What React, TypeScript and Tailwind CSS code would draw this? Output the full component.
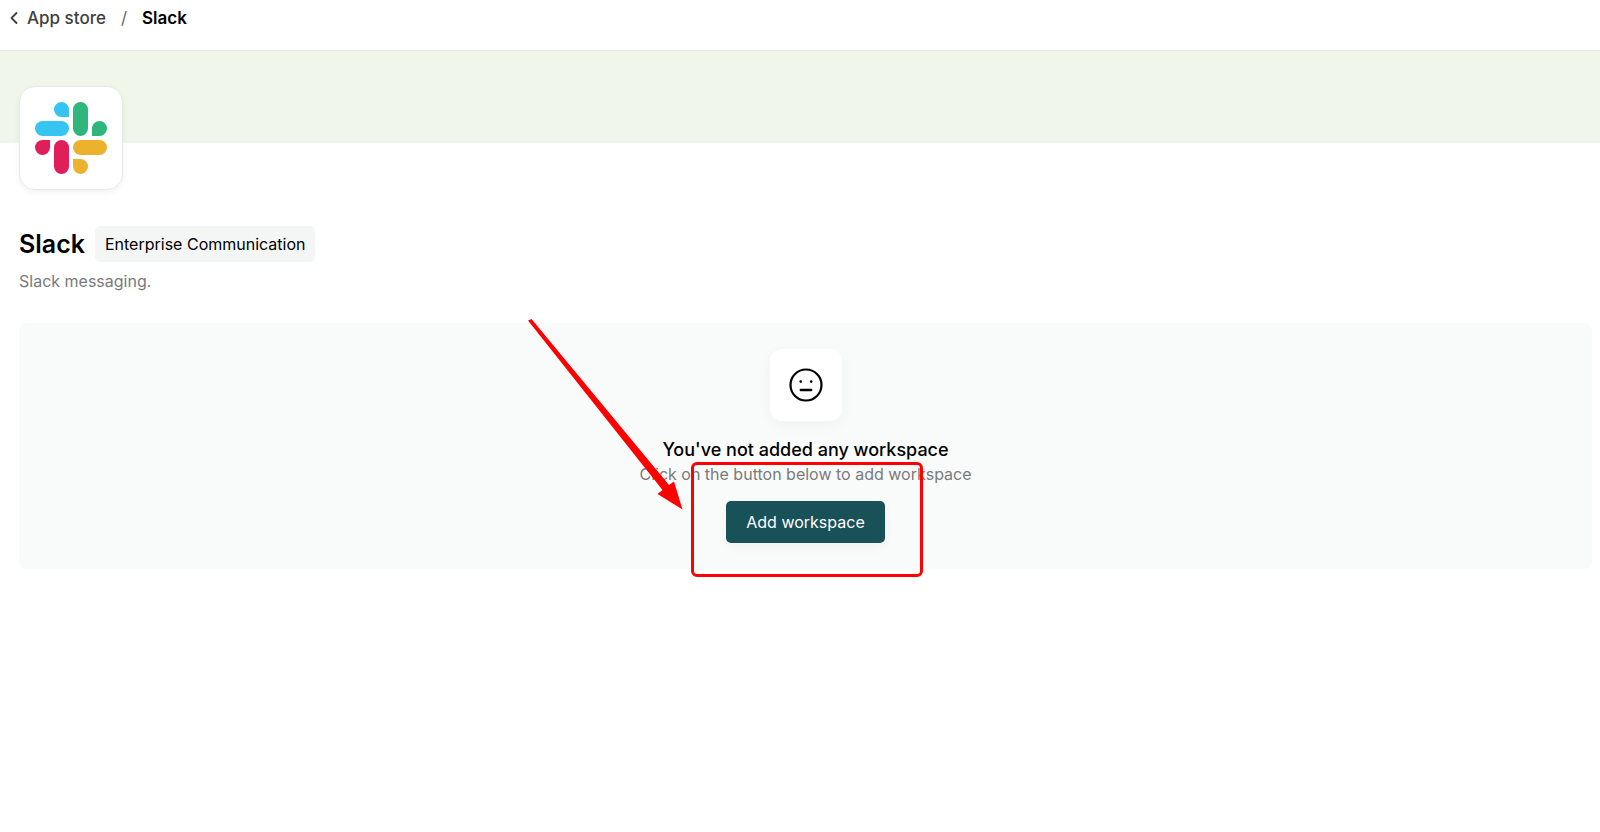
import React from "react";
import { ChevronLeft } from "lucide-react";

const SlackLogo: React.FC = () => (
  <svg viewBox="0 0 72 72" className="size-[72px]" role="img" aria-label="Slack">
    <g fill="#36c5f0">
      <path d="M26.5 0a7.5 7.5 0 0 0 0 15H34V7.5A7.5 7.5 0 0 0 26.5 0z" />
      <rect x="0" y="19" width="34" height="15" rx="7.5" />
    </g>
    <g fill="#2eb67d">
      <rect x="38" y="0" width="15" height="34" rx="7.5" />
      <path d="M72 26.5a7.5 7.5 0 0 0-15 0V34h7.5a7.5 7.5 0 0 0 7.5-7.5z" />
    </g>
    <g fill="#e01e5a">
      <path d="M0 45.5a7.5 7.5 0 0 0 15 0V38H7.5A7.5 7.5 0 0 0 0 45.5z" />
      <rect x="19" y="38" width="15" height="34" rx="7.5" />
    </g>
    <g fill="#ecb22e">
      <rect x="38" y="38" width="34" height="15" rx="7.5" />
      <path d="M45.5 72a7.5 7.5 0 0 0 0-15H38v7.5a7.5 7.5 0 0 0 7.5 7.5z" />
    </g>
  </svg>
);

const NeutralFace: React.FC = () => (
  <svg viewBox="0 0 34 34" className="size-[34px]" fill="none" stroke="black" aria-hidden="true">
    <circle cx="17" cy="17" r="15.5" strokeWidth="2.2" />
    <path d="M11.8 22h10.4" strokeWidth="2.4" strokeLinecap="round" />
    <circle cx="11.7" cy="13.6" r="1.3" fill="black" stroke="none" />
    <circle cx="22.2" cy="13.6" r="1.3" fill="black" stroke="none" />
  </svg>
);

// Red arrow and frame that point at the add button
const Highlight: React.FC = () => (
  <div className="absolute -top-1 left-1/2 pointer-events-none">
    <svg viewBox="0 0 155 191" className="absolute top-0 -left-[278px] w-[155px] h-[191px]" fill="#ff0000" aria-hidden="true">
      <path d="M0 1.5 3.500 0l137.500 166 5-3.500 8.500 28-25-15.500 5-4z" />
    </svg>
    <div className="absolute top-[143px] -left-[115px] w-[232px] h-[115px] rounded-md border-3 border-[#ff0000]" />
  </div>
);

const Breadcrumb: React.FC = () => (
  <nav aria-label="Breadcrumb" className="flex items-start h-[51px] px-1 pt-1 border-b border-gray-200 text-[17px] leading-7">
    <a href="#" className="flex items-center font-medium text-[#404040]">
      <ChevronLeft className="size-5 mr-[3px]" strokeWidth={2.2} />
      App store
    </a>
    <span className="mx-[15px] text-[#666]">/</span>
    <span className="font-semibold text-black">Slack</span>
  </nav>
);

const EmptyWorkspaces: React.FC = () => (
  <section className="relative flex flex-col items-center mt-[30px] py-[26px] rounded-lg bg-[#f9fbfa]">
    <div className="flex items-center justify-center size-[72px] rounded-xl bg-white shadow-[0_4px_16px_rgba(0,0,0,0.04)]">
      <NeutralFace />
    </div>
    <h2 className="mt-[17px] text-lg leading-6 font-medium text-black">You've not added any workspace</h2>
    <p className="text-base leading-6 text-[#7a7a7a]">Click on the button below to add workspace</p>
    <button type="button" className="mt-[15px] h-[42px] px-5 rounded-[5px] bg-[#195159] text-base text-white shadow-[0_4px_12px_rgba(0,0,0,0.04)]">
      Add workspace
    </button>
    <Highlight />
  </section>
);

const App: React.FC = () => {
  return (
    <main className="min-h-screen bg-white font-['Inter',sans-serif]">
      <Breadcrumb />
      <div className="h-[92px] bg-[#f1f6eb]" />
      <div className="pl-[19px] pr-2">
        <div className="relative flex items-center justify-center size-[104px] -mt-[57px] rounded-2xl border border-[#e9ece6] bg-white shadow-[0_2px_6px_rgba(0,0,0,0.06)]">
          <SlackLogo />
        </div>
        <div className="flex items-center gap-[10px] mt-9">
          <h1 className="text-[25px] leading-9 font-semibold text-black">Slack</h1>
          <span className="px-[10px] rounded-[5px] bg-[#f4f6f5] text-base leading-9 text-black">Enterprise Communication</span>
        </div>
        <p className="mt-[7px] text-base leading-6 text-[#7a7a7a]">Slack messaging.</p>
        <EmptyWorkspaces />
      </div>
    </main>
  );
};

export default App;
